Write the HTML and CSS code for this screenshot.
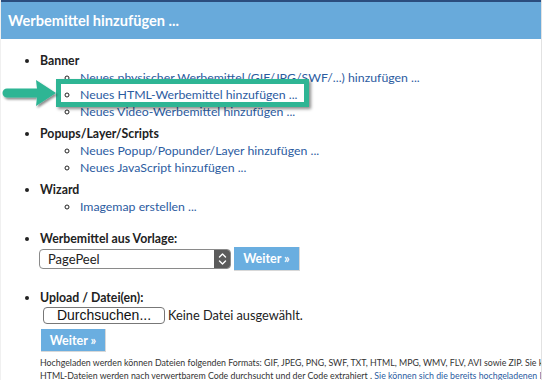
FILE: index.html
```html
<!DOCTYPE html>
<html lang="de">
<head>
<meta charset="utf-8">
<title>Werbemittel hinzufügen</title>
<link rel="stylesheet" href="styles.css">
</head>
<body>
<div class="page">
  <div class="topline"></div>
  <h1 class="header">Werbemittel hinzufügen ...</h1>
  <div class="content">
    <ul class="main">
      <li class="group"><span class="label">Banner</span>
        <ul class="sub">
          <li><a href="#">Neues physischer Werbemittel (GIF/JPG/SWF/...) hinzufügen ...</a></li>
          <li><a href="#">Neues HTML-Werbemittel hinzufügen ...</a></li>
          <li><a href="#">Neues Video-Werbemittel hinzufügen ...</a></li>
        </ul>
      </li>
      <li class="group"><span class="label">Popups/Layer/Scripts</span>
        <ul class="sub">
          <li><a href="#">Neues Popup/Popunder/Layer hinzufügen ...</a></li>
          <li><a href="#">Neues JavaScript hinzufügen ...</a></li>
        </ul>
      </li>
      <li class="group"><span class="label">Wizard</span>
        <ul class="sub">
          <li><a href="#">Imagemap erstellen ...</a></li>
        </ul>
      </li>
      <li class="group spaced"><span class="label">Werbemittel aus Vorlage:</span>
        <div class="tplrow">
          <div class="select">
            <span class="select-text">PagePeel</span>
            <span class="select-arrows">
              <svg width="9" height="14" viewBox="0 0 9 14"><path d="M1.5 5 L4.5 2 L7.5 5 M1.5 9 L4.5 12 L7.5 9" fill="none" stroke="#fff" stroke-width="1.4" stroke-linecap="round" stroke-linejoin="round"/></svg>
            </span>
          </div>
          <button class="btn btn-tpl">Weiter »</button>
        </div>
      </li>
      <li class="group upload"><span class="label">Upload / Datei(en):</span>
        <div class="filerow">
          <span class="filebtn">Durchsuchen...</span>
          <span class="filetext">Keine Datei ausgewählt.</span>
        </div>
        <button class="btn btn-up">Weiter »</button>
      </li>
    </ul>
    <p class="note">Hochgeladen werden können Dateien folgenden Formats: GIF, JPEG, PNG, SWF, TXT, HTML, MPG, WMV, FLV, AVI sowie ZIP. Sie können auch mehrere Dateien gleichzeitig hochladen.<br>HTML-Dateien werden nach verwertbarem Code durchsucht und der Code extrahiert . <a href="#">Sie können sich die bereits hochgeladenen Dateien anzeigen lassen.</a></p>
  </div>

  <div class="highlight"></div>
  <svg class="arrow" width="60" height="34" viewBox="0 0 60 34">
    <defs>
      <filter id="sh" x="-20%" y="-30%" width="150%" height="170%">
        <feDropShadow dx="1.5" dy="2" stdDeviation="1.2" flood-color="#000" flood-opacity="0.45"/>
      </filter>
    </defs>
    <path d="M6 12.5 L36 12.5 L35 4 L55 17 L35 30 L36 21.5 L6 21.5 A4.5 4.5 0 0 1 6 12.5 Z" fill="#2eb594" filter="url(#sh)"/>
  </svg>
</div>
</body>
</html>
```
FILE: styles.css
```css
* { box-sizing: border-box; }
html, body { margin: 0; padding: 0; background: #fff; }
body {
  font-family: Lato, "Open Sans", sans-serif;
  color: #222;
  width: 542px;
  height: 380px;
  overflow: hidden;
}
.page {
  position: relative;
  width: 542px;
  height: 380px;
  border-right: 1px solid #e2e2e2;
  border-left: 1px solid #f0f0f0;
  overflow: hidden;
}
.topline { height: 2px; background: #2b4d7e; }
.header {
  margin: 0;
  height: 37px;
  background: #68aadb;
  color: #fff;
  font-size: 14.6px;
  font-weight: 700;
  line-height: 37px;
  padding-left: 7px;
}
.content { font-size: 12.3px; line-height: 17px; }
.main {
  margin: 13px 0 0;
  padding-left: 39px;
  list-style: disc;
}
.group { margin-bottom: 5px; }
.group.spaced { margin-top: 15px; }
.group.upload { margin-top: 18px; }
.label { font-weight: 700; }
.sub {
  margin: 0;
  padding-left: 40px;
  list-style: circle;
}
a { color: #2c5c9f; text-decoration: none; }

.tplrow { display: flex; align-items: center; gap: 3px; margin-left: -1px; height: 24px; }
.select {
  display: flex;
  width: 192px;
  height: 20px;
  border: 1px solid #8a8a8a;
  border-radius: 4px;
  overflow: hidden;
  background: #fff;
}
.select-text { flex: 1; padding-left: 8px; font-size: 13px; line-height: 18px; }
.select-arrows {
  width: 16px;
  background: #5b5b5b;
  display: flex;
  align-items: center;
  justify-content: center;
}
.btn {
  font-family: Lato, "Open Sans", sans-serif;
  background: #6aaee0;
  color: #fff;
  font-weight: 700;
  font-size: 12.5px;
  border: none;
  border-right: 1px solid #d8d8d8;
  border-bottom: 1px solid #d8d8d8;
  padding: 0;
  cursor: pointer;
}
.btn-tpl { width: 66px; height: 24px; }
.filerow { display: flex; align-items: center; gap: 3px; margin-left: 3px; height: 17px; margin-top: 1px; }
.filebtn {
  width: 122px;
  height: 17px;
  border: 1px solid #777;
  border-radius: 4px;
  text-align: center;
  font-family: "Liberation Sans", Arial, sans-serif;
  font-size: 14px;
  line-height: 15px;
  color: #111;
}
.filetext { font-size: 12.8px; color: #222; }
.btn-up { display: block; width: 65px; height: 23px; margin-top: 5px; margin-left: 1px; }

.note {
  margin: 3px 0 0 39px;
  font-size: 8.8px;
  line-height: 12.5px;
  white-space: nowrap;
  color: #333;
}

.highlight {
  position: absolute;
  left: 55px;
  top: 79px;
  width: 253px;
  height: 28px;
  border: 5px solid #2eb594;
  box-shadow: 2px 2px 3px rgba(0,0,0,0.45);
}
.arrow {
  position: absolute;
  left: 0;
  top: 76px;
}
```
